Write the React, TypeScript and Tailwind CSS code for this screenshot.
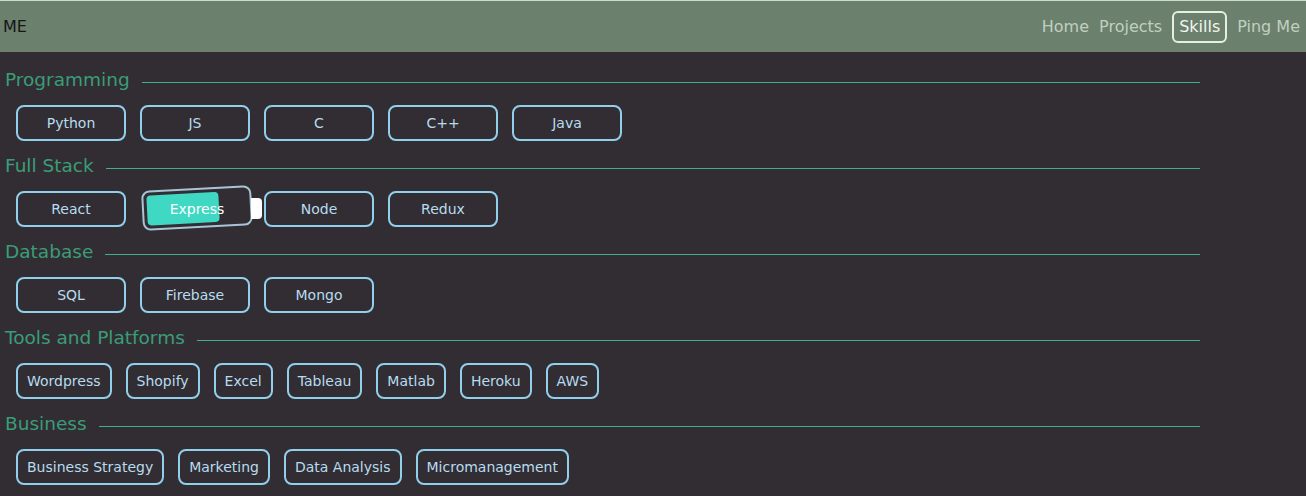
const sections = [
  { title: 'Programming', fixed: true, items: ['Python', 'JS', 'C', 'C++', 'Java'] },
  { title: 'Full Stack', fixed: true, items: ['React', 'Express', 'Node', 'Redux'] },
  { title: 'Database', fixed: true, items: ['SQL', 'Firebase', 'Mongo'] },
  { title: 'Tools and Platforms', fixed: false, items: ['Wordpress', 'Shopify', 'Excel', 'Tableau', 'Matlab', 'Heroku', 'AWS'] },
  { title: 'Business', fixed: false, items: ['Business Strategy', 'Marketing', 'Data Analysis', 'Micromanagement'] },
];

const font = { fontFamily: '"DejaVu Sans", "Liberation Sans", sans-serif' };

const Charging = () => (
  <div className="relative w-[110px] h-[36px]">
    <div className="absolute inset-0 -top-[3px] -bottom-[1px] left-[2px] right-[-2px] rotate-[-3deg] rounded-lg border-2 border-[#a8c5d6]">
      <div className="absolute left-[3px] top-[3px] bottom-[3px] w-[72px] rounded-[4px] bg-[#3fd8c3]" />
    </div>
    <div className="absolute right-[-12px] top-[7px] h-[21px] w-[11px] rounded-r-[4px] bg-white" />
    <div className="relative flex h-full items-center justify-center text-[14px] text-white pl-[4px]">Express</div>
  </div>
);

export default function App() {
  return (
    <div className="min-h-[496px] bg-[#322d33]" style={font}>
      <header className="flex h-[52px] items-center justify-between border-t border-[#cfdcc8] bg-[#6b806d] pl-[3px] pr-[6px]">
        <span className="text-[16px] text-[#161616]">ME</span>
        <nav className="flex items-center gap-[10px] text-[16px] text-[#c0d0c0]">
          <span>Home</span>
          <span>Projects</span>
          <span className="rounded-md border-2 border-[#e6efe3] px-[5px] py-[2px] text-[#f1f6ef]">Skills</span>
          <span>Ping Me</span>
        </nav>
      </header>
      <main className="w-[1200px] pt-[14px]">
        {sections.map(s => (
          <section key={s.title} className="pb-[11px]">
            <div className="flex h-[28px] items-center pl-[5px]">
              <h2 className="text-[18.5px] leading-[28px] text-[#3a9d77]">{s.title}</h2>
              <div className="ml-[12px] mt-[4px] h-px flex-1 bg-[#3fae93]" />
            </div>
            <div className="mt-[11px] flex gap-[14px] pl-[16px]">
              {s.items.map(it =>
                it === 'Express' ? <Charging key={it} /> : (
                  <div key={it}
                    className={`flex h-[36px] items-center justify-center rounded-lg border-2 border-[#90d0ec] text-[14px] text-[#b7dcef] ${s.fixed ? 'w-[110px]' : 'px-[9px]'}`}>
                    {it}
                  </div>
                )
              )}
            </div>
          </section>
        ))}
      </main>
    </div>
  );
}
